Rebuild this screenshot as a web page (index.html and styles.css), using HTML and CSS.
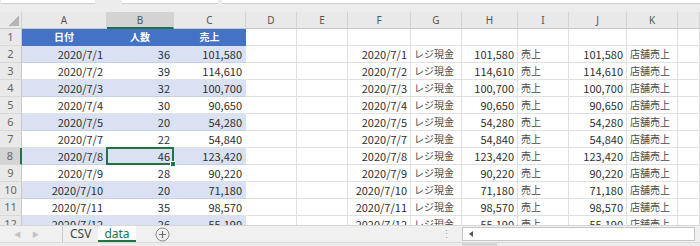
FILE: index.html
```html
<!DOCTYPE html>
<html lang="ja">
<head>
    <meta charset="UTF-8" />
    <meta name="viewport" content="width=device-width, initial-scale=1" />
    <title>data - Excel</title>
    <link rel="stylesheet" href="styles.css">
</head>
<body>

<div class="app">
    <div class="strip">
        <div class="box box-name"></div>
        <div class="box box-mid"></div>
        <div class="box box-formula"></div>
    </div>

    <div class="sheet">
        <div class="row head">
            <div class="c corner"><span class="tri"></span></div>
            <div class="c">A</div><div class="c sel">B</div><div class="c">C</div><div class="c">D</div>
            <div class="c">E</div><div class="c">F</div><div class="c">G</div><div class="c">H</div>
            <div class="c">I</div><div class="c">J</div><div class="c">K</div><div class="c"></div>
        </div>

        <div class="row tbl-head">
            <div class="c rh">1</div>
            <div class="c t th">日付</div><div class="c t th">人数</div><div class="c t th">売上</div>
            <div class="c"></div><div class="c"></div><div class="c"></div><div class="c"></div>
            <div class="c"></div><div class="c"></div><div class="c"></div><div class="c"></div><div class="c"></div>
        </div>

        <div class="row band">
            <div class="c rh">2</div>
            <div class="c t r">2020/7/1</div><div class="c t r">36</div><div class="c t r">101,580</div>
            <div class="c"></div><div class="c"></div>
            <div class="c r">2020/7/1</div><div class="c jp">レジ現金</div><div class="c r">101,580</div><div class="c jp">売上</div>
            <div class="c r">101,580</div><div class="c jp">店舗売上</div><div class="c"></div>
        </div>
        <div class="row">
            <div class="c rh">3</div>
            <div class="c t r">2020/7/2</div><div class="c t r">39</div><div class="c t r">114,610</div>
            <div class="c"></div><div class="c"></div>
            <div class="c r">2020/7/2</div><div class="c jp">レジ現金</div><div class="c r">114,610</div><div class="c jp">売上</div>
            <div class="c r">114,610</div><div class="c jp">店舗売上</div><div class="c"></div>
        </div>
        <div class="row band">
            <div class="c rh">4</div>
            <div class="c t r">2020/7/3</div><div class="c t r">32</div><div class="c t r">100,700</div>
            <div class="c"></div><div class="c"></div>
            <div class="c r">2020/7/3</div><div class="c jp">レジ現金</div><div class="c r">100,700</div><div class="c jp">売上</div>
            <div class="c r">100,700</div><div class="c jp">店舗売上</div><div class="c"></div>
        </div>
        <div class="row">
            <div class="c rh">5</div>
            <div class="c t r">2020/7/4</div><div class="c t r">30</div><div class="c t r">90,650</div>
            <div class="c"></div><div class="c"></div>
            <div class="c r">2020/7/4</div><div class="c jp">レジ現金</div><div class="c r">90,650</div><div class="c jp">売上</div>
            <div class="c r">90,650</div><div class="c jp">店舗売上</div><div class="c"></div>
        </div>
        <div class="row band">
            <div class="c rh">6</div>
            <div class="c t r">2020/7/5</div><div class="c t r">20</div><div class="c t r">54,280</div>
            <div class="c"></div><div class="c"></div>
            <div class="c r">2020/7/5</div><div class="c jp">レジ現金</div><div class="c r">54,280</div><div class="c jp">売上</div>
            <div class="c r">54,280</div><div class="c jp">店舗売上</div><div class="c"></div>
        </div>
        <div class="row">
            <div class="c rh">7</div>
            <div class="c t r">2020/7/7</div><div class="c t r">22</div><div class="c t r">54,840</div>
            <div class="c"></div><div class="c"></div>
            <div class="c r">2020/7/7</div><div class="c jp">レジ現金</div><div class="c r">54,840</div><div class="c jp">売上</div>
            <div class="c r">54,840</div><div class="c jp">店舗売上</div><div class="c"></div>
        </div>
        <div class="row band">
            <div class="c rh sel-row">8</div>
            <div class="c t r">2020/7/8</div><div class="c t r active">46</div><div class="c t r">123,420</div>
            <div class="c"></div><div class="c"></div>
            <div class="c r">2020/7/8</div><div class="c jp">レジ現金</div><div class="c r">123,420</div><div class="c jp">売上</div>
            <div class="c r">123,420</div><div class="c jp">店舗売上</div><div class="c"></div>
        </div>
        <div class="row">
            <div class="c rh">9</div>
            <div class="c t r">2020/7/9</div><div class="c t r">28</div><div class="c t r">90,220</div>
            <div class="c"></div><div class="c"></div>
            <div class="c r">2020/7/9</div><div class="c jp">レジ現金</div><div class="c r">90,220</div><div class="c jp">売上</div>
            <div class="c r">90,220</div><div class="c jp">店舗売上</div><div class="c"></div>
        </div>
        <div class="row band">
            <div class="c rh">10</div>
            <div class="c t r">2020/7/10</div><div class="c t r">20</div><div class="c t r">71,180</div>
            <div class="c"></div><div class="c"></div>
            <div class="c r">2020/7/10</div><div class="c jp">レジ現金</div><div class="c r">71,180</div><div class="c jp">売上</div>
            <div class="c r">71,180</div><div class="c jp">店舗売上</div><div class="c"></div>
        </div>
        <div class="row">
            <div class="c rh">11</div>
            <div class="c t r">2020/7/11</div><div class="c t r">35</div><div class="c t r">98,570</div>
            <div class="c"></div><div class="c"></div>
            <div class="c r">2020/7/11</div><div class="c jp">レジ現金</div><div class="c r">98,570</div><div class="c jp">売上</div>
            <div class="c r">98,570</div><div class="c jp">店舗売上</div><div class="c"></div>
        </div>
        <div class="row band">
            <div class="c rh">12</div>
            <div class="c t r">2020/7/12</div><div class="c t r">26</div><div class="c t r">55,190</div>
            <div class="c"></div><div class="c"></div>
            <div class="c r">2020/7/12</div><div class="c jp">レジ現金</div><div class="c r">55,190</div><div class="c jp">売上</div>
            <div class="c r">55,190</div><div class="c jp">店舗売上</div><div class="c"></div>
        </div>
    </div>

    <div class="tabbar">
        <div class="nav"><span>&#9664;</span><span>&#9654;</span></div>
        <div class="tab">CSV</div>
        <div class="tab current">data</div>
        <div class="add">
            <svg width="15" height="15" viewBox="0 0 15 15">
                <circle cx="7.5" cy="7.5" r="6.5" fill="none" stroke="#8a8a8a" stroke-width="1"/>
                <path d="M7.5 4v7M4 7.5h7" stroke="#6f6f6f" stroke-width="1.2"/>
            </svg>
        </div>
        <div class="grip">&#8942;</div>
        <div class="hscroll">
            <span class="arrow"></span>
        </div>
    </div>
    <div class="bottom">
        <div class="thumb"></div>
    </div>
</div>

</body>
</html>
```

FILE: styles.css
```css
body {
    margin: 0;
    background: #fff;
    font-family: "Noto Sans CJK JP", "Noto Sans", sans-serif;
}
.app {
    width: 700px;
    height: 246px;
    overflow: hidden;
    background: #ececec;
}

/* formula bar remnants */
.strip {
    display: flex;
    height: 12px;
    background: #ececec;
}
.box {
    height: 3px;
    background: #fff;
    border-bottom: 1px solid #cfcfcf;
}
.box-name { width: 94px; margin-left: 1px; }
.box-mid { width: 96px; margin-left: 27px; }
.box-formula { flex: 1; margin-left: 4px; }

/* grid */
.sheet {
    height: 213px;
    overflow: hidden;
    background: #fff;
}
.row {
    display: grid;
    grid-template-columns: 22px 85px 67px 72px 51px 51px 63px 51px 56px 51px 58px 51px 1fr;
    height: 17px;
}
.c {
    position: relative;
    box-sizing: border-box;
    border-right: 1px solid #e0e0e0;
    border-bottom: 1px solid #e0e0e0;
    padding: 0 3px;
    font-size: 11px;
    line-height: 16px;
    color: #2e2e2e;
    white-space: nowrap;
    overflow: hidden;
}
.r { text-align: right; }
.jp { font-size: 10px; color: #4a4a4a; }

.head .c {
    background: #e9e9e9;
    border-right-color: #d2d2d2;
    border-bottom-color: #c8c8c8;
    text-align: center;
    color: #555;
    font-size: 10px;
    font-family: "Noto Sans", sans-serif;
}
.head .sel {
    background: #d3d3d3;
    border-bottom: 2px solid #217346;
}
.corner {
    display: flex;
    justify-content: flex-end;
    align-items: flex-end;
    padding: 0 2px 2px 0;
}
.tri {
    width: 10px;
    height: 10px;
    background: linear-gradient(135deg, transparent 50%, #b5b5b5 50%);
}

.rh {
    background: #e9e9e9;
    border-right-color: #c8c8c8;
    border-bottom-color: #d8d8d8;
    text-align: center;
    color: #666;
    font-size: 11px;
    font-family: "Noto Sans", sans-serif;
    padding: 0;
}
.sel-row {
    background: #d3d3d3;
    border-right: 2px solid #217346;
}

/* table style */
.t { border-right-color: transparent; }
.band .t {
    background: #d9e1f2;
    border-bottom-color: #c4cfe6;
}
.tbl-head .th {
    background: #4472c4;
    border-color: #4472c4;
    color: #fff;
    font-weight: bold;
    font-size: 10px;
    text-align: center;
}

.active::after {
    content: "";
    position: absolute;
    left: -1px;
    top: -1px;
    right: -1px;
    bottom: -1px;
    border: 2px solid #217346;
}
.active {
    overflow: visible;
}
.active::before {
    content: "";
    position: absolute;
    right: -3px;
    bottom: -3px;
    width: 4px;
    height: 4px;
    background: #217346;
    border: 1px solid #fff;
    z-index: 1;
}

/* sheet tabs */
.tabbar {
    display: flex;
    align-items: stretch;
    height: 17px;
    background: #f0f0f0;
    border-top: 1px solid #d6d6d6;
    box-sizing: border-box;
}
.nav {
    width: 63px;
    display: flex;
    gap: 11px;
    padding-left: 14px;
    align-items: center;
    color: #c2c2c2;
    font-size: 7px;
    box-sizing: border-box;
    border-right: 1px solid #c8c8c8;
}
.tab {
    padding: 0 7px;
    font-family: "Noto Sans", sans-serif;
    font-size: 12px;
    line-height: 15px;
    color: #444;
}
.tab.current {
    padding: 0 6px;
    background: #fff;
    color: #217346;
    border-bottom: 2px solid #217346;
}
.add {
    display: flex;
    align-items: center;
    margin-left: 19px;
}
.grip {
    margin-left: 271px;
    color: #a8a8a8;
    font-size: 11px;
    line-height: 15px;
}
.hscroll {
    display: flex;
    align-items: center;
    margin: 1px 0 1px 10px;
    width: 233px;
    background: #fff;
    border: 1px solid #c6c6c6;
    box-sizing: border-box;
}
.arrow {
    width: 0;
    height: 0;
    margin-left: 3px;
    border-top: 3px solid transparent;
    border-bottom: 3px solid transparent;
    border-right: 4px solid #555;
    padding-right: 3px;
    border-left: 0;
}
.bottom {
    height: 4px;
    background: #ececec;
    border-top: 1px solid #dadada;
    box-sizing: border-box;
}
.thumb {
    margin-left: 462px;
    width: 35px;
    height: 3px;
    background: #d4d4d4;
}
```
